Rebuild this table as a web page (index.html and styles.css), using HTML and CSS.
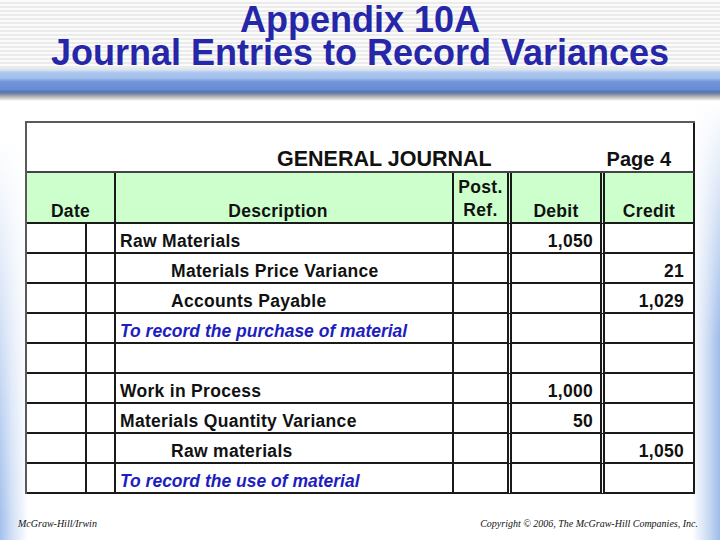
FILE: index.html
```html
<!DOCTYPE html>
<html lang="en">
<head>
<meta charset="utf-8">
<title>Appendix 10A</title>
<link rel="stylesheet" href="styles.css">
</head>
<body>
<div class="slide">
  <header class="title-area">
    <h1><span class="t-line">Appendix 10A</span><span class="t-line">Journal Entries to Record Variances</span></h1>
  </header>
  <div class="bar"></div>
  <main class="content">
    <table class="journal">
      <colgroup>
        <col class="c-d1"><col class="c-d2"><col class="c-desc"><col class="c-post"><col class="c-debit"><col class="c-credit">
      </colgroup>
      <tr class="r-title">
        <td colspan="6" class="title-cell">
          <div class="title-flex"><span class="gj">GENERAL JOURNAL</span><span class="page">Page 4</span></div>
        </td>
      </tr>
      <tr class="r-head">
        <th colspan="2">Date</th>
        <th class="desc-h">Description</th>
        <th class="post">Post.<br>Ref.</th>
        <th class="debit">Debit</th>
        <th>Credit</th>
      </tr>
      <tr><td></td><td></td><td class="desc">Raw Materials</td><td class="post"></td><td class="debit num">1,050</td><td class="num"></td></tr>
      <tr><td></td><td></td><td class="desc ind">Materials Price Variance</td><td class="post"></td><td class="debit num"></td><td class="num">21</td></tr>
      <tr><td></td><td></td><td class="desc ind">Accounts Payable</td><td class="post"></td><td class="debit num"></td><td class="num">1,029</td></tr>
      <tr><td></td><td></td><td class="desc note">To record the purchase of material</td><td class="post"></td><td class="debit num"></td><td class="num"></td></tr>
      <tr><td></td><td></td><td class="desc"></td><td class="post"></td><td class="debit num"></td><td class="num"></td></tr>
      <tr><td></td><td></td><td class="desc">Work in Process</td><td class="post"></td><td class="debit num">1,000</td><td class="num"></td></tr>
      <tr><td></td><td></td><td class="desc">Materials Quantity Variance</td><td class="post"></td><td class="debit num">50</td><td class="num"></td></tr>
      <tr><td></td><td></td><td class="desc ind">Raw materials</td><td class="post"></td><td class="debit num"></td><td class="num">1,050</td></tr>
      <tr><td></td><td></td><td class="desc note">To record the use of material</td><td class="post"></td><td class="debit num"></td><td class="num"></td></tr>
    </table>
  </main>
  <footer class="foot">
    <span>McGraw-Hill/Irwin</span>
    <span>Copyright © 2006, The McGraw-Hill Companies, Inc.</span>
  </footer>
</div>
</body>
</html>
```
FILE: styles.css
```css
* { box-sizing: border-box; }
html, body { margin: 0; padding: 0; }
body {
  width: 720px;
  height: 540px;
  overflow: hidden;
  font-family: "Liberation Sans", Arial, sans-serif;
  background: #fff;
}
.slide {
  width: 720px;
  height: 540px;
  display: flex;
  flex-direction: column;
  background:
    linear-gradient(to bottom, #fff 140px, rgba(255,255,255,0) 520px) left top / 30px 100% no-repeat,
    linear-gradient(to right, #a3c0ec 0, #d2e0f6 12px, #fff 28px) left top / 30px 100% no-repeat,
    linear-gradient(to bottom, #fff 100px, rgba(255,255,255,0) 340px) right top / 30px 100% no-repeat,
    linear-gradient(to left, #9ebce9 0, #cddcf4 12px, #fff 28px) right top / 30px 100% no-repeat,
    #fff;
}
.title-area {
  height: 68px;
  padding-top: 4px;
  background: repeating-linear-gradient(to bottom, #fbfbfb 0, #fbfbfb 2px, #ebebeb 2px, #ebebeb 4px);
}
h1 {
  margin: 0;
  text-align: center;
  color: #2626a8;
  font-size: 36px;
  font-weight: bold;
  display: flex;
  flex-direction: column;
  align-items: center;
}
.t-line {
  display: block;
  height: 33px;
  line-height: 31px;
}
.bar {
  height: 33px;
  background: linear-gradient(to bottom,
    #e4e6ec 0, #dde4ef 2px, #c3d5f2 3px, #abc6ef 5px, #a3c0ec 10px,
    #87a9e2 12px, #7094d9 14px, #6a8dd6 21px, #5373bd 24px,
    #7b88a2 26px, #a9a9ae 28px, #d8d8d8 31px, #ffffff 33px);
}
.content {
  padding: 20px 0 0 25px;
}
.journal {
  border-collapse: separate;
  border-spacing: 0;
  table-layout: fixed;
  width: 670px;
  background: #fff;
  border-left: 2px solid #5a5a5a;
  border-top: 2px solid #5a5a5a;
  color: #111;
}
.c-d1 { width: 60px; }
.c-d2 { width: 29px; }
.c-desc { width: 338px; }
.c-post { width: 58px; }
.c-debit { width: 93px; }
.c-credit { width: 90px; }

.journal td, .journal th {
  padding: 0;
  border-right: 2px solid #1a1a1a;
  border-bottom: 2px solid #1a1a1a;
  vertical-align: top;
  font-size: 17.5px;
  font-weight: bold;
  letter-spacing: 0.3px;
  line-height: 22px;
  white-space: nowrap;
  overflow: hidden;
}
.journal tr { height: 30px; }
.journal .post { border-right: 5px double #1a1a1a; }
.journal .debit { border-right: 5px double #1a1a1a; }

.r-title { height: 50px !important; }
.journal .title-cell {
  vertical-align: bottom;
  border-bottom-color: #444;
  line-height: 24px;
  letter-spacing: 0;
}
.title-flex {
  display: flex;
  align-items: baseline;
  padding-left: 250px;
  padding-right: 22px;
}
.gj { font-size: 21.5px; }
.page { font-size: 20px; margin-left: auto; }

.r-head { height: 51px !important; }
.journal th {
  background: #ccffcc;
  vertical-align: bottom;
  text-align: center;
  line-height: 20px;
  padding-bottom: 1px;
}
.journal th.desc-h { padding-right: 12px; }
.journal th.post { line-height: 23px; padding-bottom: 0; }

.journal td { padding-top: 6px; }
.desc { padding-left: 4px !important; }
.desc.ind { padding-left: 55px !important; }
.journal td.note { color: #1e1ec0; font-style: italic; letter-spacing: 0; }
.num { text-align: right; padding-right: 7px !important; }
.journal td.num:last-child { padding-right: 9px !important; }

.foot {
  display: flex;
  justify-content: space-between;
  margin-top: 24px;
  padding: 0 22px 0 18px;
  font-family: "Liberation Serif", "Times New Roman", serif;
  font-style: italic;
  font-size: 10px;
  line-height: 12px;
  color: #111;
}
```
